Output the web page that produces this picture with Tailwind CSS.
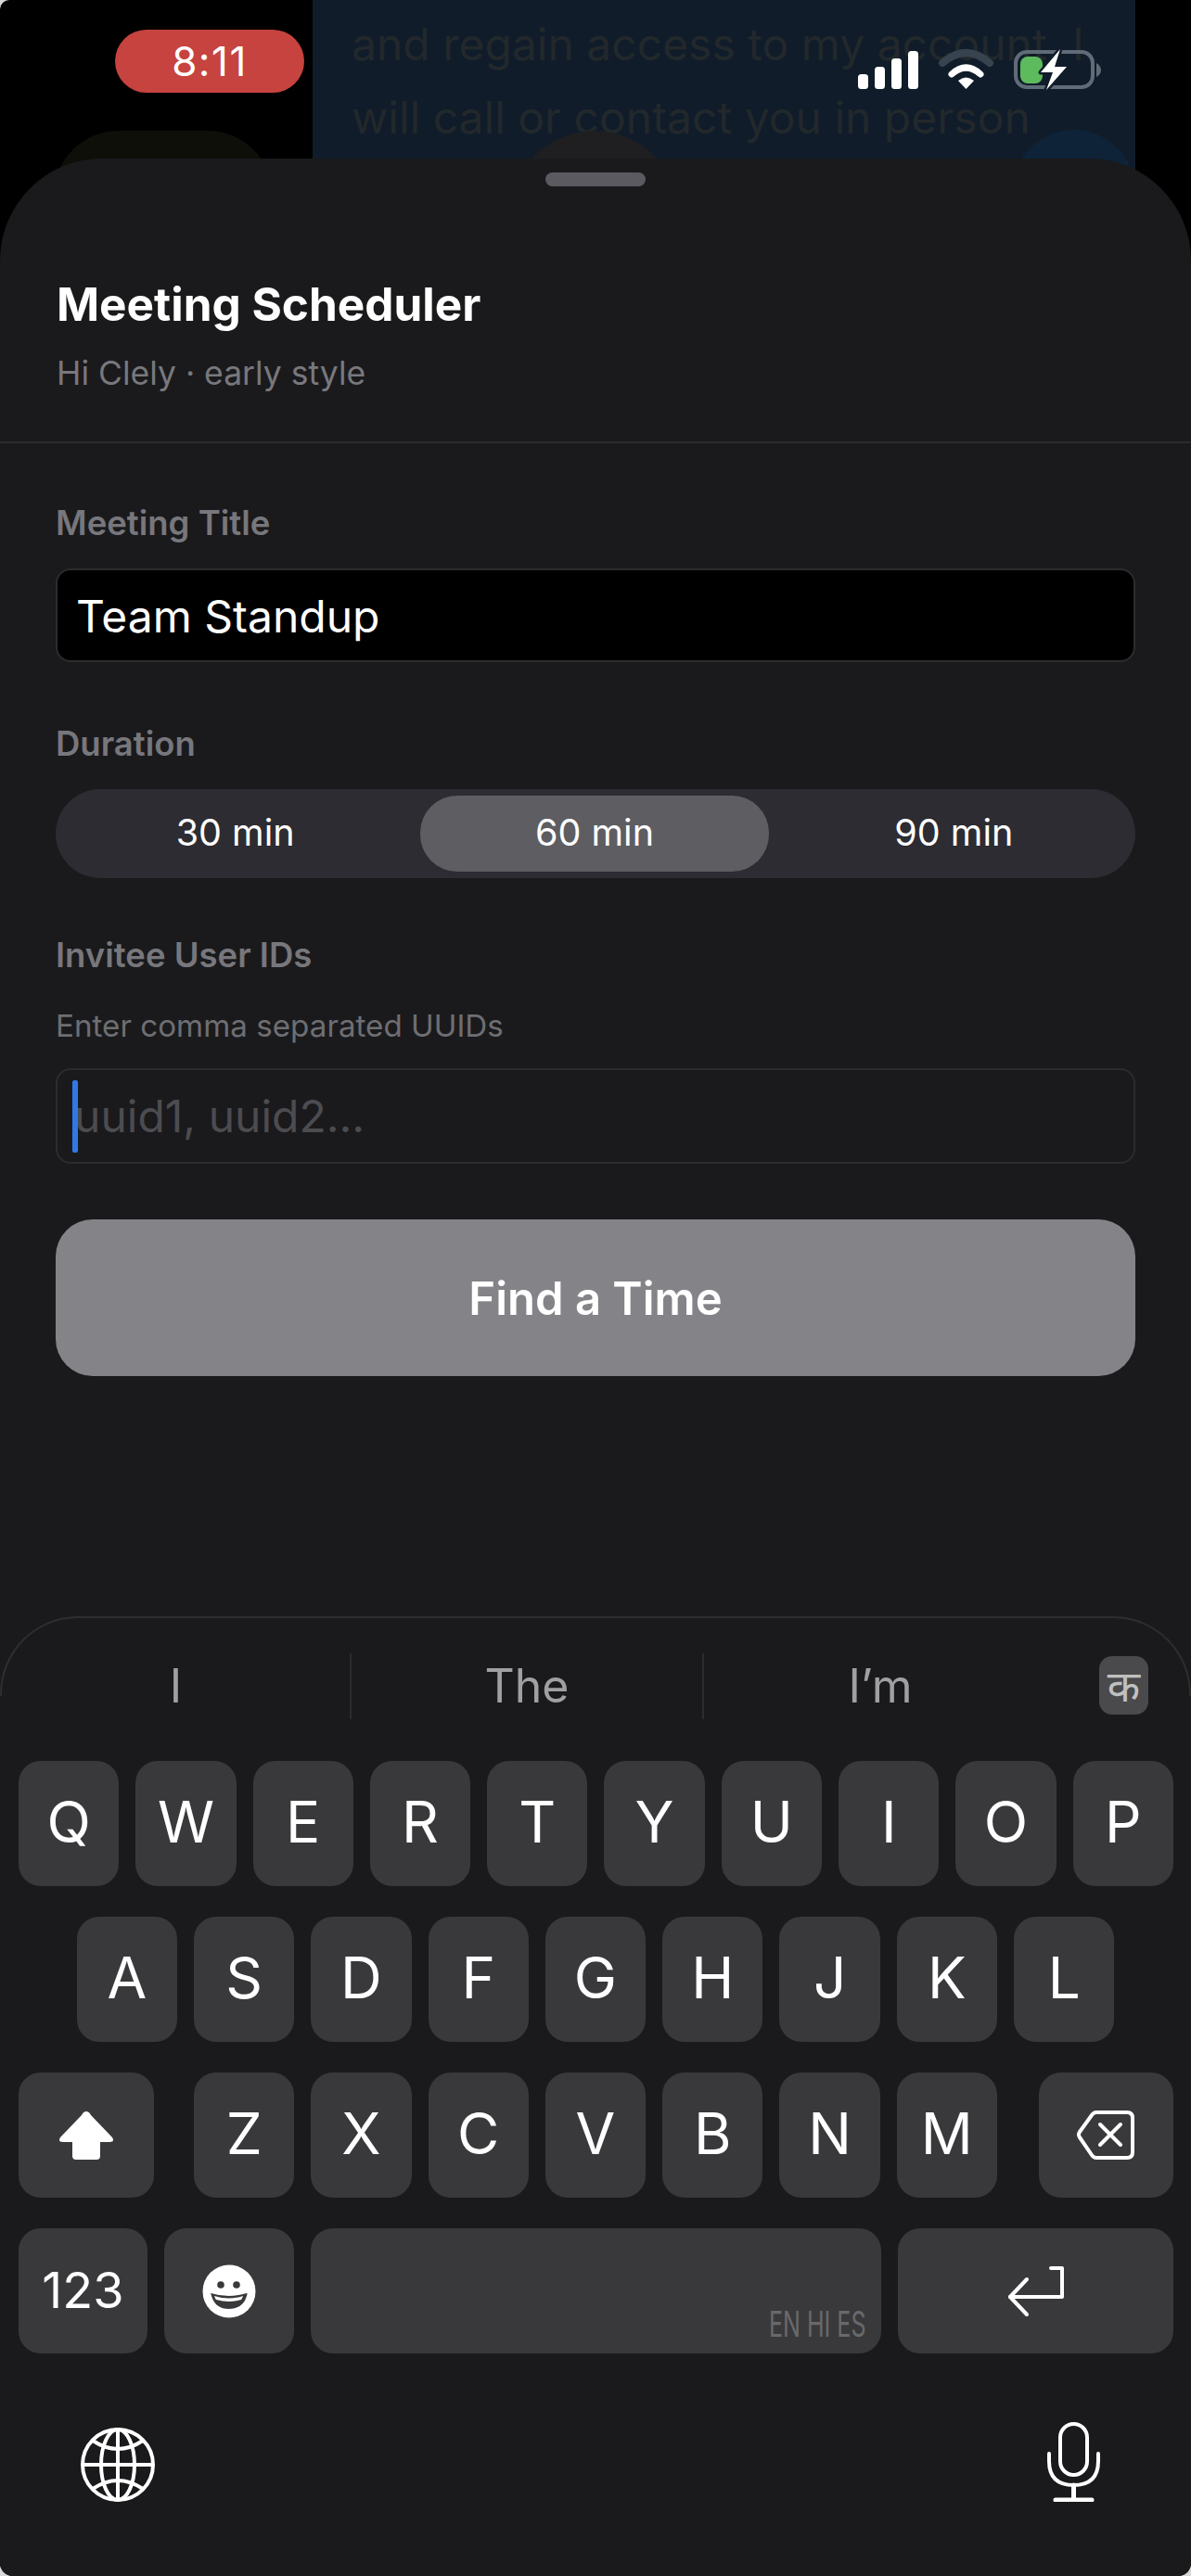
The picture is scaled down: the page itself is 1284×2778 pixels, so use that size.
<!DOCTYPE html>
<html lang="en">
<head>
    <meta charset="UTF-8">
    <meta name="viewport" content="width=device-width, initial-scale=1.0">
    <title>Meeting Scheduler</title>
    <script src="https://cdn.jsdelivr.net/npm/@tailwindcss/browser@4"></script>
</head>
<body class="bg-[#d8d8d8]">
    <div class="relative w-[1284px] h-[2778px] overflow-hidden bg-black rounded-tl-[10px] rounded-b-[14px] font-['Inter',sans-serif] flex flex-col">

        <!-- Screen behind the sheet -->
        <div class="absolute top-0 left-[337px] w-[887px] h-[190px] bg-[#101c2a] pl-[42px] pt-[8px] text-[48px] leading-[79px] text-[#22282b] whitespace-nowrap">
            <p>and regain access to my account. I</p>
            <p>will call or contact you in person</p>
        </div>
        <div class="absolute top-[141px] left-[58px] w-[236px] h-[120px] rounded-t-[70px] bg-[#0e0f09]"></div>
        <div class="absolute top-[141px] left-[550px] w-[182px] h-[182px] rounded-full bg-[#1f1f21]"></div>
        <div class="absolute top-[140px] left-[1091px] w-[133px] h-[134px] rounded-t-full bg-[#0e2338]"></div>

        <!-- Status bar -->
        <div class="absolute z-10 top-[32px] left-[124px] w-[204px] h-[68px] rounded-[34px] bg-[#c6433f] flex items-center justify-center text-white text-[44px] tracking-[1.5px] font-normal">8:11</div>
        <svg class="absolute z-10 top-[50px] left-[920px]" width="270" height="50" viewBox="0 0 270 50">
            <rect x="5" y="30" width="11" height="16" rx="3.5" fill="#fff"/>
            <rect x="23" y="22" width="11" height="24" rx="3.5" fill="#fff"/>
            <rect x="41" y="13" width="11" height="33" rx="3.5" fill="#fff"/>
            <rect x="59" y="5" width="11" height="41" rx="3.5" fill="#fff"/>
            <path d="M96 18 Q121.5 -4 147 18" fill="none" stroke="#37434f" stroke-width="8" stroke-linecap="round"/>
            <path d="M106 30 Q121.5 16 137 30" fill="none" stroke="#fff" stroke-width="7" stroke-linecap="round"/>
            <path d="M113 37 Q121.5 30 130 37 L121.5 46Z" fill="#fff"/>
            <rect x="175" y="6" width="83" height="38" rx="12" fill="none" stroke="#5f6b76" stroke-width="4"/>
            <path d="M262 18 Q267 21 267 25.5 Q267 30 262 33Z" fill="#5f6b76"/>
            <rect x="180" y="11" width="24" height="29" rx="8" fill="#5dbb5d"/>
            <path d="M223 3 L202 28 L215 28 L208 47 L230 22 L217 22Z" fill="#fff" stroke="#101c2a" stroke-width="5" paint-order="stroke" stroke-linejoin="round"/>
        </svg>

        <!-- Sheet -->
        <div class="relative mt-[171px] flex-1 flex flex-col bg-[#1a1a1c] rounded-t-[110px]">
            <div class="mt-[15px] mx-auto w-[108px] h-[15px] rounded-full bg-[#5a5a60]"></div>

            <div class="px-[61px]">
                <h1 class="mt-[97px] text-[49.5px] leading-[60px] font-bold text-white">Meeting Scheduler</h1>
                <p class="mt-[23px] text-[35.5px] leading-[44px] text-[#78787d]">Hi Clely · early style</p>
            </div>
            <div class="mt-[51px] h-[2px] bg-[#2c2c2e]"></div>

            <div class="px-[60px]">
                <label class="block mt-[64px] text-[36.5px] leading-[44px] font-semibold text-[#77777c]">Meeting Title</label>
                <input readonly value="Team Standup" class="block mt-[27px] w-full h-[101px] pl-[20px] pr-[21px] pt-[2px] rounded-[16px] bg-black border-2 border-[#2c2c2e] text-[48px] text-white outline-none">

                <label class="block mt-[66px] text-[36.5px] leading-[44px] font-semibold text-[#77777c]">Duration</label>
                <div class="mt-[27px] h-[96px] pl-[6px] pr-[8px] py-[7px] rounded-full bg-[#2c2c32] flex gap-[12px] text-white text-[39.5px]">
                    <div class="flex-1 flex items-center justify-center rounded-[40px]">30 min</div>
                    <div class="flex-1 flex items-center justify-center rounded-[40px] bg-[#5d5d62]">60 min</div>
                    <div class="flex-1 flex items-center justify-center rounded-[40px]">90 min</div>
                </div>

                <label class="block mt-[61px] text-[36.5px] leading-[44px] font-semibold text-[#77777c]">Invitee User IDs</label>
                <p class="mt-[34px] text-[33.2px] leading-[40px] text-[#6e6e73]">Enter comma separated UUIDs</p>
                <div class="relative mt-[26px]">
                    <input readonly placeholder="uuid1, uuid2..." class="block w-full h-[103px] pl-[18px] pr-[21px] rounded-[16px] bg-transparent border-2 border-[#2c2c2e] text-[48px] text-white placeholder:text-[#4c4c50] outline-none">
                    <div class="absolute top-[13px] left-[18px] w-[6px] h-[78px] rounded-[2px] bg-[#2f78e8]"></div>
                </div>

                <button class="block mt-[60px] w-full h-[169px] pt-[2px] rounded-[40px] bg-[#848388] text-white text-[49px] font-semibold">Find a Time</button>
            </div>

            <!-- Keyboard -->
            <div class="relative mt-auto h-[1035px]">
                <div class="absolute top-0 left-0 right-0 h-[86px] rounded-t-[84px] border-t-2 border-x-2 border-[#2e2e30]"></div>

                <div class="relative pt-[41px] pl-[2px] flex items-center h-[110px] text-[50px] text-[#a0a0a2]">
                    <div class="w-[377px] h-[71px] flex items-center justify-center border-r-2 border-[#2c2c2e]">I</div>
                    <div class="w-[380px] h-[71px] flex items-center justify-center border-r-2 border-[#2c2c2e]">The</div>
                    <div class="w-[380px] h-[71px] flex items-center justify-center">I’m</div>
                    <div class="ml-[46px] -mt-[2px] w-[53px] h-[63px] flex items-center justify-center rounded-[14px] bg-[#4a4a4c] text-[#c0c0c0] text-[46px] font-['Noto_Sans',sans-serif]">क</div>
                </div>

                <div class="mt-[46px] pl-[20px] pr-[19px] flex flex-col gap-[33px] text-white text-[62px]">
                    <div class="flex gap-[18px] h-[135px]">
                        <div class="flex-1 flex items-center justify-center pb-[5px] rounded-[24px] bg-[#39393b]">Q</div>
                        <div class="flex-1 flex items-center justify-center pb-[5px] rounded-[24px] bg-[#39393b]">W</div>
                        <div class="flex-1 flex items-center justify-center pb-[5px] rounded-[24px] bg-[#39393b]">E</div>
                        <div class="flex-1 flex items-center justify-center pb-[5px] rounded-[24px] bg-[#39393b]">R</div>
                        <div class="flex-1 flex items-center justify-center pb-[5px] rounded-[24px] bg-[#39393b]">T</div>
                        <div class="flex-1 flex items-center justify-center pb-[5px] rounded-[24px] bg-[#39393b]">Y</div>
                        <div class="flex-1 flex items-center justify-center pb-[5px] rounded-[24px] bg-[#39393b]">U</div>
                        <div class="flex-1 flex items-center justify-center pb-[5px] rounded-[24px] bg-[#39393b]">I</div>
                        <div class="flex-1 flex items-center justify-center pb-[5px] rounded-[24px] bg-[#39393b]">O</div>
                        <div class="flex-1 flex items-center justify-center pb-[5px] rounded-[24px] bg-[#39393b]">P</div>
                    </div>
                    <div class="flex justify-center gap-[18px] h-[135px] pr-[1px]">
                        <div class="w-[108.3px] flex items-center justify-center pb-[5px] rounded-[24px] bg-[#39393b]">A</div>
                        <div class="w-[108.3px] flex items-center justify-center pb-[5px] rounded-[24px] bg-[#39393b]">S</div>
                        <div class="w-[108.3px] flex items-center justify-center pb-[5px] rounded-[24px] bg-[#39393b]">D</div>
                        <div class="w-[108.3px] flex items-center justify-center pb-[5px] rounded-[24px] bg-[#39393b]">F</div>
                        <div class="w-[108.3px] flex items-center justify-center pb-[5px] rounded-[24px] bg-[#39393b]">G</div>
                        <div class="w-[108.3px] flex items-center justify-center pb-[5px] rounded-[24px] bg-[#39393b]">H</div>
                        <div class="w-[108.3px] flex items-center justify-center pb-[5px] rounded-[24px] bg-[#39393b]">J</div>
                        <div class="w-[108.3px] flex items-center justify-center pb-[5px] rounded-[24px] bg-[#39393b]">K</div>
                        <div class="w-[108.3px] flex items-center justify-center pb-[5px] rounded-[24px] bg-[#39393b]">L</div>
                    </div>
                    <div class="flex h-[135px]">
                        <div class="w-[146px] flex items-center justify-center rounded-[24px] bg-[#39393b]">
                            <svg width="60" height="52" viewBox="0 0 60 52"><path d="M30 0 Q33 0 35 4 L58 28 Q61 33 55 33 L45 33 L45 48 Q45 52 41 52 L19 52 Q15 52 15 48 L15 33 L5 33 Q-1 33 2 28 L25 4 Q27 0 30 0Z" fill="#fff"/></svg>
                        </div>
                        <div class="ml-[43px] flex-1 flex gap-[18px]">
                            <div class="flex-1 flex items-center justify-center pb-[5px] rounded-[24px] bg-[#39393b]">Z</div>
                            <div class="flex-1 flex items-center justify-center pb-[5px] rounded-[24px] bg-[#39393b]">X</div>
                            <div class="flex-1 flex items-center justify-center pb-[5px] rounded-[24px] bg-[#39393b]">C</div>
                            <div class="flex-1 flex items-center justify-center pb-[5px] rounded-[24px] bg-[#39393b]">V</div>
                            <div class="flex-1 flex items-center justify-center pb-[5px] rounded-[24px] bg-[#39393b]">B</div>
                            <div class="flex-1 flex items-center justify-center pb-[5px] rounded-[24px] bg-[#39393b]">N</div>
                            <div class="flex-1 flex items-center justify-center pb-[5px] rounded-[24px] bg-[#39393b]">M</div>
                        </div>
                        <div class="ml-[45px] w-[145px] flex items-center justify-center pr-[2px] rounded-[24px] bg-[#39393b]">
                            <svg width="62" height="53" viewBox="0 0 62 53" fill="none" stroke="#fff" stroke-width="4" stroke-linecap="round" stroke-linejoin="round">
                                <path d="M21 2 L54 2 Q60 2 60 8 L60 45 Q60 51 54 51 L21 51 Q18 51 16 48 L3 29 Q1 26 3 23 L16 5 Q18 2 21 2Z"/>
                                <path d="M25 15 L47 37 M47 15 L25 37"/>
                            </svg>
                        </div>
                    </div>
                    <div class="flex gap-[18px] h-[135px]">
                        <div class="w-[139px] flex items-center justify-center pb-[2px] rounded-[24px] bg-[#39393b] text-[54px]">123</div>
                        <div class="w-[140px] flex items-center justify-center rounded-[24px] bg-[#39393b]">
                            <svg width="58" height="58" viewBox="0 0 58 58">
                                <circle cx="29" cy="29" r="28.5" fill="#fff"/>
                                <circle cx="20" cy="22" r="3.8" fill="#39393b"/>
                                <circle cx="37" cy="22" r="3.8" fill="#39393b"/>
                                <path d="M9 31 Q29 37 48 31 Q49 31 48 34 Q44 48 29 48 Q14 48 10 34 Q9 31 9 31Z" fill="#39393b"/>
                                <path d="M13 34 Q29 39 44 34 Q43 37 42 38 Q29 42 15 38 Q14 37 13 34Z" fill="#fff"/>
                            </svg>
                        </div>
                        <div class="flex-1 flex items-end justify-end pr-[16px] pb-[12px] rounded-[24px] bg-[#39393b]">
                            <span class="text-[38px] leading-[40px] text-[#69696b] origin-right scale-x-[0.66] whitespace-nowrap">EN HI ES</span>
                        </div>
                        <div class="w-[297px] flex items-center justify-center rounded-[24px] bg-[#39393b]">
                            <svg width="62" height="54" viewBox="0 0 62 54" fill="none" stroke="#fff" stroke-width="4" stroke-linecap="round" stroke-linejoin="round">
                                <path d="M47 2 L59 2 L59 33 L3 33"/>
                                <path d="M21 14 L3 33 L21 52"/>
                            </svg>
                        </div>
                    </div>
                </div>

                <div class="mt-[74px] pl-[87px] pr-[98px] flex justify-between items-end">
                    <svg width="80" height="80" viewBox="0 0 80 80" fill="none" stroke="#fff" stroke-width="4">
                        <circle cx="40" cy="40" r="38"/>
                        <ellipse cx="40" cy="40" rx="18" ry="38"/>
                        <path d="M40 2 L40 78 M2 40 L78 40"/>
                        <path d="M13 14 Q40 32 67 14 M13 66 Q40 48 67 66"/>
                    </svg>
                    <svg width="57" height="86" viewBox="0 0 57 86" fill="none" stroke="#fff" stroke-width="4" stroke-linecap="round">
                        <rect x="14" y="2" width="29" height="55" rx="14.5"/>
                        <path d="M2 34 L2 42 Q2 68 28.5 68 Q55 68 55 42 L55 34"/>
                        <path d="M28.5 68 L28.5 83 M9 84 L48 84" stroke-width="5"/>
                    </svg>
                </div>
            </div>
        </div>
    </div>
</body>
</html>
